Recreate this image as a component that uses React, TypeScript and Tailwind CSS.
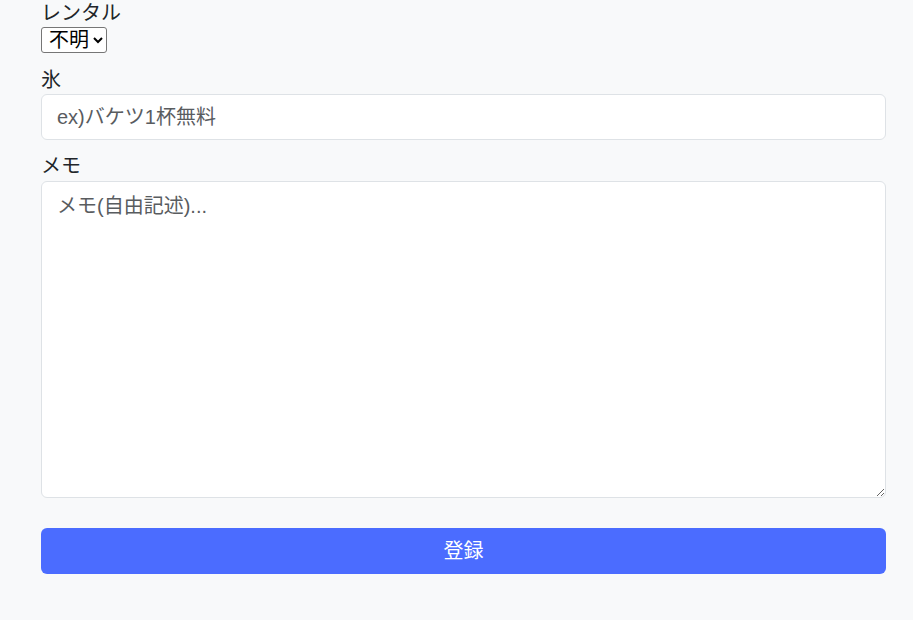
export default function App() {
  return (
    <div
      className="min-h-[620px] bg-[#f8f9fa] pl-[41px] pr-[27px] text-[20px] leading-[27px] text-[#212529]"
      style={{ fontFamily: '"Liberation Sans", "Noto Sans CJK JP", sans-serif' }}
    >
      <div className="mb-[13px]">
        <label className="block">レンタル</label>
        <select className="h-[26px] w-[66px] rounded-[3px] border border-[#767676] bg-white pl-[3px] text-[20px] leading-[22px] text-black">
          <option>不明</option>
          <option>あり</option>
          <option>なし</option>
        </select>
      </div>

      <div className="mb-[13px]">
        <label className="block">氷</label>
        <input
          type="text"
          placeholder="ex)バケツ1杯無料"
          className="block h-[46px] w-full rounded-[6px] border border-[#dee2e6] bg-white px-[15px] text-[20px] placeholder:text-[#595c5f] focus:outline-none"
        />
      </div>

      <div>
        <label className="block">メモ</label>
        <textarea
          placeholder="メモ(自由記述)..."
          className="mt-[1px] block h-[317px] w-full rounded-[6px] border border-[#dee2e6] bg-white px-[15px] pt-[11px] pb-[8px] text-[20px] leading-[27px] placeholder:text-[#595c5f] focus:outline-none"
        />
      </div>

      <button className="mt-[30px] block h-[46px] w-full rounded-[6px] bg-[#4b6cff] text-[20px] text-white">
        登録
      </button>
    </div>
  )
}
